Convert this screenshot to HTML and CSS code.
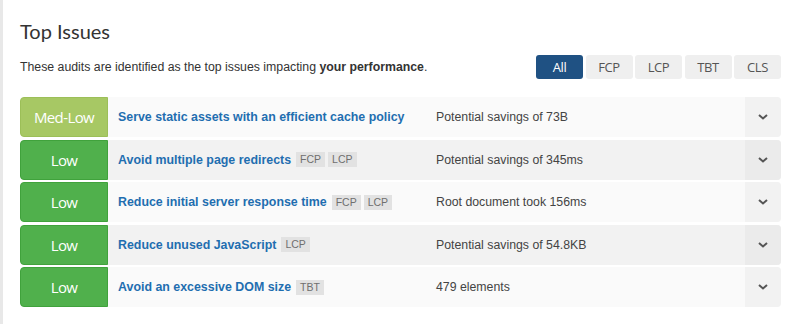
FILE: index.html
```html
<!DOCTYPE html>
<html lang="en">
<head>
	<meta charset="UTF-8">
	<title>Top Issues</title>
	<link rel="stylesheet" href="styles.css">
</head>
<body>
	<div id="panel">
		<h2 class="title">Top Issues</h2>
		<div class="intro">
			<p class="desc">These audits are identified as the top issues impacting <b>your performance</b>.</p>
			<div class="filters">
				<span class="filter active">All</span>
				<span class="filter">FCP</span>
				<span class="filter">LCP</span>
				<span class="filter">TBT</span>
				<span class="filter">CLS</span>
			</div>
		</div>

		<div class="issues">
			<div class="issue">
				<div class="impact med-low">Med-Low</div>
				<div class="name">Serve static assets with an efficient cache policy</div>
				<div class="saving">Potential savings of 73B</div>
				<div class="toggle"><svg width="10" height="6" viewBox="0 0 10 6"><path d="M1 1 L5 4.5 L9 1" fill="none" stroke="#555" stroke-width="2"/></svg></div>
			</div>
			<div class="issue">
				<div class="impact low">Low</div>
				<div class="name">Avoid multiple page redirects <span class="tag">FCP</span><span class="tag">LCP</span></div>
				<div class="saving">Potential savings of 345ms</div>
				<div class="toggle"><svg width="10" height="6" viewBox="0 0 10 6"><path d="M1 1 L5 4.5 L9 1" fill="none" stroke="#555" stroke-width="2"/></svg></div>
			</div>
			<div class="issue">
				<div class="impact low">Low</div>
				<div class="name">Reduce initial server response time <span class="tag">FCP</span><span class="tag">LCP</span></div>
				<div class="saving">Root document took 156ms</div>
				<div class="toggle"><svg width="10" height="6" viewBox="0 0 10 6"><path d="M1 1 L5 4.5 L9 1" fill="none" stroke="#555" stroke-width="2"/></svg></div>
			</div>
			<div class="issue">
				<div class="impact low">Low</div>
				<div class="name">Reduce unused JavaScript <span class="tag">LCP</span></div>
				<div class="saving">Potential savings of 54.8KB</div>
				<div class="toggle"><svg width="10" height="6" viewBox="0 0 10 6"><path d="M1 1 L5 4.5 L9 1" fill="none" stroke="#555" stroke-width="2"/></svg></div>
			</div>
			<div class="issue">
				<div class="impact low">Low</div>
				<div class="name">Avoid an excessive DOM size <span class="tag">TBT</span></div>
				<div class="saving">479 elements</div>
				<div class="toggle"><svg width="10" height="6" viewBox="0 0 10 6"><path d="M1 1 L5 4.5 L9 1" fill="none" stroke="#555" stroke-width="2"/></svg></div>
			</div>
		</div>
	</div>
</body>
</html>
```

FILE: styles.css
```css
body {
	margin: 0;
	background: #fff;
	font-family: "Liberation Sans", Arial, sans-serif;
	color: #333;
}

#panel {
	border-left: 3px solid #e8e8e8;
	padding: 17px 19px 17px 17px;
	height: 290px;
}

.title {
	margin: 0;
	font-family: Lato, sans-serif;
	font-weight: normal;
	font-size: 20px;
	line-height: 28px;
	color: #333;
}

.intro {
	display: flex;
	align-items: center;
	justify-content: space-between;
	margin-top: 10px;
}

.desc {
	margin: 0;
	font-size: 12.3px;
	color: #333;
}

.filters {
	display: flex;
	gap: 2.5px;
}

.filter {
	width: 47px;
	height: 24px;
	line-height: 24px;
	text-align: center;
	border-radius: 3px;
	background: #efefef;
	color: #555;
	font-family: "Open Sans", sans-serif;
	font-size: 13px;
	letter-spacing: -0.4px;
}

.filter.active {
	background: #1f5183;
	color: #fff;
}

.issues {
	margin-top: 18px;
	display: flex;
	flex-direction: column;
	gap: 2.5px;
}

.issue {
	display: flex;
	align-items: center;
	height: 40px;
	background: #fafafa;
	border-radius: 4px;
}

.issue:nth-child(even) {
	background: #f2f2f2;
}

.impact {
	width: 88px;
	height: 40px;
	box-sizing: border-box;
	line-height: 38px;
	text-align: center;
	color: #fff;
	border-radius: 4px 0 0 4px;
	font-family: "Open Sans", sans-serif;
	font-size: 15px;
	letter-spacing: -0.6px;
}

.med-low {
	background: #a7c864;
	border: 1px solid #9cbf58;
}

.low {
	background: #50b04c;
	border: 1px solid #40a23c;
}

.name {
	width: 318px;
	padding-left: 10px;
	font-size: 12.4px;
	font-weight: bold;
	color: #1f6eb0;
	display: flex;
	align-items: center;
}

.tag {
	display: inline-block;
	margin-left: 3px;
	padding: 0 4px;
	height: 15px;
	line-height: 15px;
	background: #e2e2e2;
	color: #6f6f6f;
	font-size: 10.5px;
	font-weight: normal;
}

.name .tag:first-child {
	margin-left: 5px;
}

.saving {
	flex: 1;
	font-size: 12.3px;
	color: #444;
}

.toggle {
	width: 36px;
	height: 40px;
	display: flex;
	align-items: center;
	justify-content: center;
	background: #f2f2f2;
	border-radius: 0 4px 4px 0;
}

.issue:nth-child(even) .toggle {
	background: #ebebeb;
}
```
